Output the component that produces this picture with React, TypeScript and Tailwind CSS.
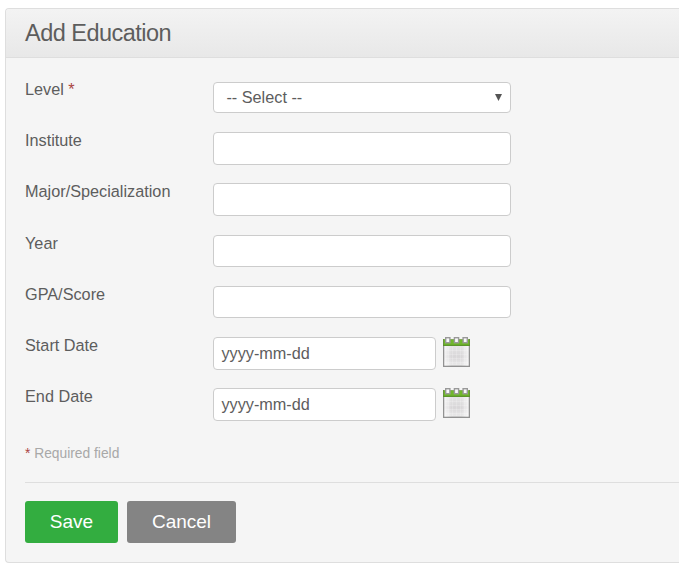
function Calendar() {
  return (
    <svg width="27" height="31" viewBox="0 0 27 31" className="ml-[7px] shrink-0">
      <defs>
        <linearGradient id="page" x1="0" y1="0" x2="0" y2="1">
          <stop offset="0" stopColor="#e6e6e6" />
          <stop offset=".55" stopColor="#d8d6d8" />
          <stop offset="1" stopColor="#ebebeb" />
        </linearGradient>
        <linearGradient id="edge" x1="0" y1="0" x2="1" y2="0">
          <stop offset="0" stopColor="#fff" stopOpacity=".7" />
          <stop offset=".3" stopColor="#fff" stopOpacity="0" />
          <stop offset=".7" stopColor="#fff" stopOpacity="0" />
          <stop offset="1" stopColor="#fff" stopOpacity=".7" />
        </linearGradient>
      </defs>
      <rect x=".7" y="8" width="25.6" height="21.3" fill="url(#page)" stroke="#929292" strokeWidth="1.4" />
      <path d="M5.5 10v18M9.5 10v18M13.5 10v18M17.5 10v18M21.5 10v18M2 13.5h23M2 17.5h23M2 21.5h23M2 25.5h23" stroke="#fff" strokeOpacity=".2" />
      <rect x="1.4" y="9" width="24.2" height="19.6" fill="url(#edge)" />
      <rect x="0" y="2" width="27" height="6.8" fill="#70b72b" />
      <path d="M0 2.5h27" stroke="#83ad57" />
      <path d="M.5 2v6.8M26.5 2v6.8" stroke="#65903d" />
      <path d="M0 8.3h27" stroke="#558d27" />
      {[2.7, 11.4, 20.1].map((x) => (
        <rect key={x} x={x} y=".7" width="4.2" height="5" fill="#fafafa" stroke="#999" strokeWidth="1.4" />
      ))}
    </svg>
  );
}

const rows = [
  { label: "Level", kind: "select", height: "h-[50px]", box: "h-[31px]", shift: "-mt-0.5" },
  { label: "Institute", kind: "text", height: "h-[51px]", box: "h-[33px]", shift: "-mt-px" },
  { label: "Major/Specialization", kind: "text", height: "h-[52px]", box: "h-[33px]", shift: "-mt-px" },
  { label: "Year", kind: "text", height: "h-[51px]", box: "h-[32px]", shift: "-mt-px" },
  { label: "GPA/Score", kind: "text", height: "h-[51px]", box: "h-[32px]", shift: "-mt-px" },
  { label: "Start Date", kind: "date", height: "h-[51px]", box: "h-[33px]", shift: "-mt-px" },
  { label: "End Date", kind: "date", height: "h-[51px]", box: "h-[33px]", shift: "-mt-px" },
];

const field = "rounded-[4px] border border-[#cccccc] bg-white";

export default function App() {
  return (
    <div className="h-[573px] overflow-hidden bg-white pl-[5px] pt-2 font-['Liberation_Sans',Arial,sans-serif] text-[16.25px] text-[#5d5d5d]">
      <section className="h-[555px] rounded-l-[4px] border border-r-0 border-[#dedede] bg-[#f5f5f5]">
        <header className="flex h-[49px] items-center rounded-tl-[3px] border-b border-[#dedede] bg-linear-to-b from-[#f3f3f3] to-[#e8e8e8] pl-[19px]">
          <h1 className="text-[23.5px] leading-6 tracking-[-0.52px]">Add Education</h1>
        </header>
        <form className="pl-[19px] pt-6">
          {rows.map((row) => (
            <div key={row.label} className={`flex items-start ${row.height}`}>
              <label className={`w-[188px] leading-[18px] ${row.shift}`}>
                {row.label}
                {row.kind === "select" && <span className="text-[#aa4442]"> *</span>}
              </label>
              {row.kind === "select" && (
                <div className={`flex w-[298px] items-center justify-between pl-[12.4px] pr-2 ${field} ${row.box}`}>
                  <span className="-mt-0.5 leading-5">-- Select --</span>
                  <svg width="7" height="7" viewBox="0 0 7 7">
                    <path d="M0 0h7L3.5 7z" fill="#555" />
                  </svg>
                </div>
              )}
              {row.kind === "text" && (
                <input aria-label={row.label} className={`w-[298px] ${field} ${row.box}`} />
              )}
              {row.kind === "date" && (
                <>
                  <input aria-label={row.label} defaultValue="yyyy-mm-dd" className={`w-[223px] px-[7.4px] ${field} ${row.box}`} />
                  <Calendar />
                </>
              )}
            </div>
          ))}
          <p className="mt-[7px] text-[13.8px] leading-4 text-[#a8a8a8]">
            <span className="text-[#aa4442]">*</span> Required field
          </p>
          <div className="mt-5 flex gap-[9px] border-t border-[#dedede] pt-[18px] text-[19px] text-white">
            <button type="button" className="h-[42px] w-[93px] rounded-[3px] bg-[#33ad40]">Save</button>
            <button type="button" className="h-[42px] w-[109px] rounded-[3px] bg-[#848484]">Cancel</button>
          </div>
        </form>
      </section>
    </div>
  );
}
